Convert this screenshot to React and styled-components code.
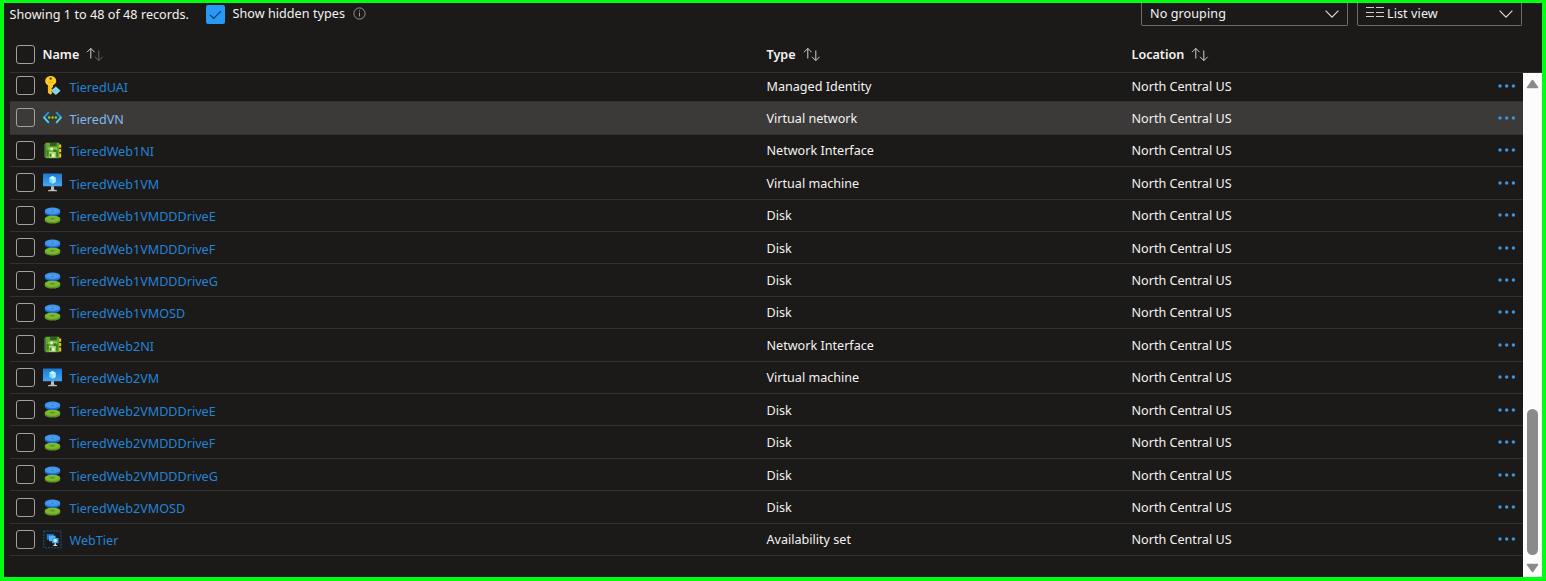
import React from "react";
import styled, { createGlobalStyle } from "styled-components";

const Global = createGlobalStyle`
  * { box-sizing: border-box; }
  html, body { margin: 0; background: #1b1a19; }
  body { font-family: "Noto Sans", "Open Sans", sans-serif; font-size: 12.6px; color: #f3f2f1; overflow: hidden; }
`;

const Frame = styled.div`
  width: 1546px;
  height: 581px;
  border: solid #00ff10;
  border-width: 3px 4px 4px;
  background: #1b1a19;
  display: flex;
  flex-direction: column;
  overflow: hidden;
`;

const Toolbar = styled.div`
  height: 34px;
  flex: none;
  display: flex;
  align-items: flex-start;
  padding: 0 20px 0 5.5px;
`;

const Records = styled.span`
  width: 196px;
  line-height: 18px;
  padding-top: 3px;
  letter-spacing: 0.04px;
  white-space: nowrap;
`;

const HiddenLabel = styled.span`
  margin: 2px 8.5px 0 8px;
  line-height: 17px;
  white-space: nowrap;
  letter-spacing: 0.04px;
`;

const InfoIcon = styled.svg`
  margin-top: 4px;
`;

const Spacer = styled.div`
  flex: 1;
`;

const Select = styled.div`
  width: ${(p) => p.$width}px;
  height: 23px;
  margin-left: ${(p) => p.$gap || 0}px;
  padding: 0 8px;
  display: flex;
  align-items: center;
  border: 1px solid #6f6d6b;
  border-top: 0;
  border-radius: 0 0 2px 2px;
  line-height: 20px;
  white-space: nowrap;
  & > span { flex: 1; letter-spacing: 0.08px; }
`;

const ListGlyph = styled.svg`
  margin: -3px 3px 0 0;
`;

const HeaderRow = styled.div`
  height: 36px;
  flex: none;
  margin: 0 0 0 5.5px;
  padding-left: 6px;
  display: flex;
  align-items: center;
  border-bottom: 1px solid #323130;
  font-weight: 600;
`;

const NameCell = styled.div`
  width: 751px;
  flex: none;
  display: flex;
  align-items: center;
`;

const TypeCell = styled.div`
  width: 365px;
  flex: none;
  display: flex;
  align-items: center;
  padding-top: ${(p) => (p.$body ? 1 : 0)}px;
`;

const LocationCell = styled.div`
  flex: 1;
  display: flex;
  align-items: center;
  padding-top: ${(p) => (p.$body ? 1 : 0)}px;
`;

const Checkbox = styled.span`
  width: 19px;
  height: 19px;
  flex: none;
  margin-right: 8px;
  border: 1px solid #a3a19f;
  border-radius: 3px;
`;

const CheckedBox = styled.span`
  width: 19px;
  height: 19px;
  margin-top: 2px;
  flex: none;
  background: #2899f5;
  border-radius: 2px;
  display: flex;
  align-items: center;
  justify-content: center;
`;

const SortIcon = styled.svg`
  margin-left: 7px;
`;

const Body = styled.div`
  flex: 1;
  min-height: 0;
  display: flex;
`;

const Rows = styled.div`
  flex: 1;
  margin-left: 5.5px;
  overflow: hidden;
`;

const Row = styled.div`
  height: 32.43px;
  display: flex;
  align-items: center;
  padding: 0 7.5px 0 6px;
  border-bottom: 1px solid #323130;
  background: ${(p) => (p.$active ? "#3b3a39" : "transparent")};
  &:first-child { margin-top: -3.2px; }
`;

const ResourceIcon = styled.svg`
  width: 19px;
  height: 19px;
  flex: none;
  margin-right: 8px;
`;

const Link = styled.span`
  color: ${(p) => (p.$active ? "#82b8ee" : "#2384d6")};
  padding-top: 3px;
  white-space: nowrap;
`;

const Dots = styled.svg`
  flex: none;
`;

const Scrollbar = styled.div`
  width: 19px;
  flex: none;
  background: #fcfcfc;
  display: flex;
  flex-direction: column;
  align-items: center;
  padding: 6px 0 4px;
`;

const Thumb = styled.div`
  width: 11px;
  height: 146px;
  margin: auto 0 8px;
  border-radius: 6px;
  background: #8a8a8a;
`;

const Sort = ({ dim }) => (
  <SortIcon width="18" height="15" viewBox="0 0 18 15" fill="none" stroke="#d2d0ce" strokeWidth="1">
    <path d="M4.800 11.500V1.500M1 5.200L4.800 1.400L8.600 5.200" />
    <path d="M12.800 3.500V13.500M9 9.800L12.800 13.600L16.600 9.800" stroke={dim ? "#6b6967" : "#d2d0ce"} />
  </SortIcon>
);

const Chevron = () => (
  <svg width="14" height="8" viewBox="0 0 14 8" fill="none" stroke="#e1dfdd" strokeWidth="1.1">
    <path d="M0.600 0.700L7 7.100L13.400 0.700" />
  </svg>
);

const drawings = {
  key: (
    <>
      <path d="M7.800 0C4.600 0 2.200 2.200 2.200 5c0 1.900 1 3.400 2.700 4.300v7.400l2.600 2.100 2-2-1.300-1.500 1.500-1.400-1.300-1.500 1.600-1.400V9.200c1.900-.9 3.200-2.300 3.200-4.300C13.200 2.200 11 0 7.800 0z" fill="#ffca1f" />
      <path d="M6 9.800v6.700" stroke="#e5a51b" strokeWidth=".8" />
      <circle cx="7.700" cy="2.600" r="1.200" fill="#574212" />
      <path d="M5 6.200h5.500" stroke="#e8a713" strokeWidth=".8" />
      <path d="M12.800 10.400l4.700 4.400-4.700 4.200-4.700-4.200z" fill="#8de3f5" />
      <path d="M12.800 10.400v8.600M8.300 14.800h9" stroke="#6aafc0" strokeWidth=".5" />
    </>
  ),
  network: (
    <>
      <path d="M5.800 4.200L1 9.500M13.200 4.200L18 9.500" fill="none" stroke="#2490dc" strokeWidth="2" />
      <path d="M.6 9l5.200 5.800M18.400 9l-5.200 5.800" stroke="#48d3f0" strokeWidth="1.900" />
      <g fill="#8bd329"><circle cx="6.100" cy="9.500" r="1.250" /><circle cx="9.500" cy="9.500" r="1.250" /><circle cx="12.900" cy="9.500" r="1.250" /></g>
    </>
  ),
  nic: (
    <>
      <path d="M1.500 3v13" stroke="#46524c" />
      <path d="M16 3.500h2.200v3.200H16zM16 8h2.200v3.200H16zM16 12.500h2.200v4H16z" fill="#f0c928" />
      <rect x="2.300" y="1.800" width="14" height="15.400" rx=".6" fill="#62a82c" />
      <path d="M7 2h6.800v3.200H7z" fill="#315c22" />
      <path d="M5 6.700h9v1.800H5z" fill="#95ce54" />
      <path d="M3.500 9h2v6h-2zM13.200 9.500h1.800v6h-1.800z" fill="#438223" />
      <path d="M6 10.800h6.700v6H6z" fill="#aadb78" />
      <path d="M7.300 6.400h2.500v2.800H7.300zM9 12.700h2.500v3H9z" fill="#e2f0d9" />
      <path d="M10.500 8.500h2.800V11h-2.800zM6.700 12.700h1.600v3H6.700z" fill="#3e7426" />
    </>
  ),
  vm: (
    <>
      <linearGradient id="screen" x1="0" y1="0" x2="0" y2="1"><stop stopColor="#1b78d4" /><stop offset="1" stopColor="#4aa7ef" /></linearGradient>
      <rect x="0" y=".5" width="19" height="12.800" rx=".6" fill="url(#screen)" />
      <path d="M9.500 3l3.200 1.800v4.200l-3.200 1.800L6.300 9V4.800z" fill="#72dff5" />
      <path d="M9.500 3l3.200 1.800-3.200 1.800-3.200-1.800z" fill="#c8f6ff" />
      <path d="M9.500 6.600l3.200-1.800V9l-3.200 1.800z" fill="#a9effb" />
      <path d="M8 13.300h3v3.200l3 .8v1H5v-1l3-.8z" fill="#bdbdbd" />
    </>
  ),
  disk: (
    <>
      <path d="M1.800 12.800v1.600c0 1.900 3.400 3.100 7.700 3.100s7.700-1.200 7.700-3.100v-1.600z" fill="#5b9625" />
      <ellipse cx="9.500" cy="12.800" rx="7.700" ry="3.200" fill="#7db72c" />
      <ellipse cx="9.500" cy="12.800" rx="2.400" ry=".5" fill="#4b7920" />
      <path d="M1.800 4.700v2c0 1.900 3.400 3.200 7.700 3.200s7.700-1.300 7.700-3.200v-2z" fill="#1d70cc" />
      <ellipse cx="9.500" cy="4.900" rx="7.700" ry="3.300" fill="#3f98ed" />
      <ellipse cx="9.500" cy="4.900" rx="3.100" ry="1" fill="#72b7f3" />
      <ellipse cx="9.500" cy="5" rx="2.100" ry=".55" fill="#1c5b9e" />
    </>
  ),
  set: (
    <>
      <rect x=".8" y="1" width="17.200" height="16.800" fill="none" stroke="#17659b" strokeWidth=".8" strokeDasharray="2 1" />
      <path d="M3.800 4.200h7v5.500h-7z" fill="#1682dc" />
      <path d="M6 5.700h6.500v5.500H6z" fill="#56b0f3" />
      <path d="M9 8h6.500v5.200H9z" fill="#3ca2ee" />
      <path d="M12.200 8.800l1.700 1v1.800l-1.700 1-1.700-1V9.800z" fill="#b7f2ff" />
      <path d="M11.500 13.200h1.500v1.600l1.300.5v.7h-4.100v-.7l1.300-.5z" fill="#ddd" />
    </>
  ),
};

const resources = [
  ["TieredUAI", "Managed Identity", "key"],
  ["TieredVN", "Virtual network", "network"],
  ["TieredWeb1NI", "Network Interface", "nic"],
  ["TieredWeb1VM", "Virtual machine", "vm"],
  ["TieredWeb1VMDDDriveE", "Disk", "disk"],
  ["TieredWeb1VMDDDriveF", "Disk", "disk"],
  ["TieredWeb1VMDDDriveG", "Disk", "disk"],
  ["TieredWeb1VMOSD", "Disk", "disk"],
  ["TieredWeb2NI", "Network Interface", "nic"],
  ["TieredWeb2VM", "Virtual machine", "vm"],
  ["TieredWeb2VMDDDriveE", "Disk", "disk"],
  ["TieredWeb2VMDDDriveF", "Disk", "disk"],
  ["TieredWeb2VMDDDriveG", "Disk", "disk"],
  ["TieredWeb2VMOSD", "Disk", "disk"],
  ["WebTier", "Availability set", "set"],
];

export default function App() {
  return (
    <>
      <Global />
      <Frame>
        <Toolbar>
          <Records>Showing 1 to 48 of 48 records.</Records>
          <CheckedBox>
            <svg width="13" height="10" viewBox="0 0 13 10" fill="none" stroke="#123b60" strokeWidth="1.2">
              <path d="M1 4.800L4.700 8.500L12 1.200" />
            </svg>
          </CheckedBox>
          <HiddenLabel>Show hidden types</HiddenLabel>
          <InfoIcon width="13" height="13" viewBox="0 0 13 13" fill="none" stroke="#a19f9d">
            <circle cx="6.500" cy="6.500" r="5.600" strokeWidth=".9" />
            <path d="M6.500 5.500V9.500M6.500 3.300V4.400" />
          </InfoIcon>
          <Spacer />
          <Select $width={206.5}><span>No grouping</span><Chevron /></Select>
          <Select $width={165} $gap={9.5}>
            <ListGlyph width="18" height="11" viewBox="0 0 18 11" stroke="#d2d0ce" strokeWidth="1">
              <path d="M0 .5H8M10 .5H18M0 5.500H8M10 5.500H18M0 9.500H8M10 9.500H18" />
            </ListGlyph>
            <span>List view</span><Chevron />
          </Select>
        </Toolbar>
        <HeaderRow>
          <NameCell><Checkbox />Name<Sort dim /></NameCell>
          <TypeCell>Type<Sort /></TypeCell>
          <LocationCell>Location<Sort /></LocationCell>
        </HeaderRow>
        <Body>
          <Rows>
            {resources.map(([name, type, icon], i) => (
              <Row key={name} $active={i === 1}>
                <NameCell>
                  <Checkbox />
                  <ResourceIcon viewBox="0 0 19 19">{drawings[icon]}</ResourceIcon>
                  <Link $active={i === 1}>{name}</Link>
                </NameCell>
                <TypeCell $body>{type}</TypeCell>
                <LocationCell $body>North Central US</LocationCell>
                <Dots width="18" height="4" viewBox="0 0 18 4" fill="#3a96dd">
                  <circle cx="2" cy="2" r="1.700" /><circle cx="8.700" cy="2" r="1.700" /><circle cx="15.400" cy="2" r="1.700" />
                </Dots>
              </Row>
            ))}
          </Rows>
          <Scrollbar>
            <svg width="13" height="10" viewBox="0 0 13 10"><path d="M6.500 1.500L11.500 8.500H1.500z" fill="#8a8a8a" stroke="#8a8a8a" strokeWidth="1.500" strokeLinejoin="round" /></svg>
            <Thumb />
            <svg width="13" height="10" viewBox="0 0 13 10"><path d="M6.500 8.500L11.500 1.500H1.500z" fill="#8a8a8a" stroke="#8a8a8a" strokeWidth="1.500" strokeLinejoin="round" /></svg>
          </Scrollbar>
        </Body>
      </Frame>
    </>
  );
}
